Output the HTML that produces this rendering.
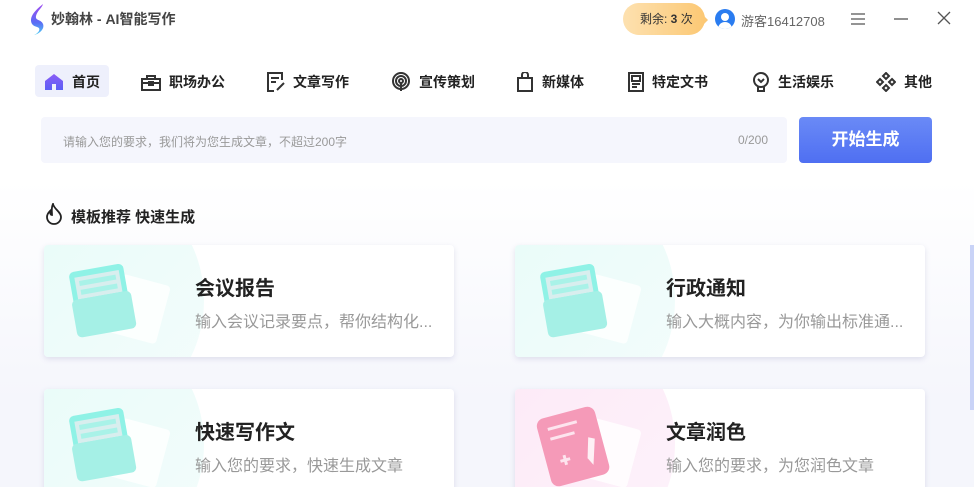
<!DOCTYPE html>
<html><head><meta charset="utf-8"><style>
*{margin:0;padding:0;box-sizing:border-box}
html,body{width:974px;height:487px;overflow:hidden}
body{font-family:"Liberation Sans","Noto Sans CJK SC",sans-serif;background:linear-gradient(#fff 0,#fff 180px,#f5f6fc 400px);position:relative;color:#222}
.abs{position:absolute}
.nav{position:absolute;top:66px;height:31px;display:flex;align-items:center;font-size:14px;font-weight:bold;color:#222}
.nav svg{margin-right:8px}
.card{position:absolute;width:410px;height:112px;background:#fff;border-radius:4px;box-shadow:0 2px 6px rgba(120,120,170,.2);overflow:hidden}
.card .blob{position:absolute;left:-40px;top:-60px;width:200px;height:230px;border-radius:50%;background:linear-gradient(135deg,#e7fbf8,#f4fdfc)}
.card .t{position:absolute;left:151px;top:27px;font-size:20px;font-weight:bold;color:#222}
.card .d{position:absolute;left:151px;top:63px;font-size:16px;color:#999}
</style></head><body>
<svg class="abs" style="left:29px;top:4px" width="18" height="32" viewBox="0 0 18 32"><defs><linearGradient id="lg" x1="0" y1="0" x2="0" y2="1"><stop offset="0" stop-color="#a04cf0"/><stop offset=".6" stop-color="#5b6cf5"/><stop offset="1" stop-color="#4fd0f5"/></linearGradient></defs><path d="M14 0 C4 8 0 14 3 20 C6 24 12 22 10 27 C8 30 5 31 5 31 C10 30 16 25 14 20 C12 15 6 17 7 12 C8 7 13 4 14 0Z" fill="url(#lg)"/></svg>
<div class="abs" style="left:51px;top:9px;font-size:14px;font-weight:bold;color:#444">妙翰林 - AI智能写作</div>
<div class="abs" style="left:623px;top:3px;width:82px;height:32px;border-radius:16px;background:linear-gradient(90deg,#fde1b0,#fcc874);font-size:12px;color:#333;line-height:32px;padding-left:17px">剩余: <b>3</b> 次</div>
<div class="abs" style="left:703px;top:15px;width:0;height:0;border-top:5px solid transparent;border-bottom:5px solid transparent;border-left:5px solid #fcc874"></div>
<div class="abs" style="left:715px;top:9px;width:20px;height:20px;border-radius:50%;background:#2a7cf0;overflow:hidden"><div style="position:absolute;left:6px;top:4px;width:8px;height:8px;border-radius:50%;background:#fff"></div><div style="position:absolute;left:3px;top:13px;width:14px;height:10px;border-radius:7px 7px 0 0;background:#fff"></div></div>
<div class="abs" style="left:741px;top:11px;font-size:13px;color:#666">游客16412708</div>
<svg class="abs" style="left:850px;top:12px" width="16" height="14"><path d="M1 2H15M1 7H15M1 12H15" stroke="#555" stroke-width="1.3"/></svg>
<svg class="abs" style="left:893px;top:12px" width="16" height="14"><path d="M1 7H15" stroke="#555" stroke-width="1.3"/></svg>
<svg class="abs" style="left:937px;top:11px" width="14" height="14"><path d="M1 1L13 13M13 1L1 13" stroke="#555" stroke-width="1.3"/></svg>

<div class="abs" style="left:35px;top:65px;width:74px;height:32px;border-radius:4px;background:#eef0fc"></div>
<div class="nav" style="left:44px"><svg width="20" height="18" viewBox="0 0 20 18"><defs><linearGradient id="hg" x1="0" y1="0" x2="0" y2="1"><stop offset="0" stop-color="#8b5cf6"/><stop offset="1" stop-color="#5a5ff5"/></linearGradient></defs><path d="M10 1L19 8V17H12V11H8V17H1V8Z" fill="url(#hg)"/></svg>首页</div>
<div class="nav" style="left:141px"><svg width="20" height="18" viewBox="0 0 20 18" fill="none" stroke="#333" stroke-width="2"><path d="M6 6V3h8v3M1 6h18v11H1zM1 10h18"/><rect x="8" y="9" width="4" height="3" fill="#333"/></svg>职场办公</div>
<div class="nav" style="left:267px"><svg width="18" height="20" viewBox="0 0 18 20" fill="none" stroke="#333" stroke-width="2"><path d="M15 8V1H1v18h6M4 6h8M4 10h5M10 18l7-7"/></svg>文章写作</div>
<div class="nav" style="left:391px"><svg width="20" height="20" viewBox="0 0 20 20" fill="none" stroke="#333" stroke-width="2"><circle cx="10" cy="9" r="8"/><circle cx="10" cy="9" r="5"/><circle cx="10" cy="9" r="2"/><path d="M10 11v8"/></svg>宣传策划</div>
<div class="nav" style="left:516px"><svg width="18" height="20" viewBox="0 0 18 20" fill="none" stroke="#333" stroke-width="2"><path d="M2 6h14v13H2zM6 6V3a3 3 0 016 0v3"/></svg>新媒体</div>
<div class="nav" style="left:628px"><svg width="16" height="20" viewBox="0 0 16 20" fill="none" stroke="#333" stroke-width="2"><rect x="1" y="1" width="14" height="18"/><rect x="4" y="4" width="8" height="5"/><path d="M4 12h8M4 15h5"/></svg>特定文书</div>
<div class="nav" style="left:752px"><svg width="18" height="20" viewBox="0 0 18 20" fill="none" stroke="#333" stroke-width="2"><circle cx="9" cy="8" r="7"/><path d="M6 15v4h6v-4M6 7l3 3 3-3"/></svg>生活娱乐</div>
<div class="nav" style="left:876px"><svg width="20" height="20" viewBox="0 0 20 20" fill="none" stroke="#333" stroke-width="2"><path d="M10 1l3 3-3 3-3-3zM10 13l3 3-3 3-3-3zM4 7l3 3-3 3-3-3zM16 7l3 3-3 3-3-3z"/></svg>其他</div>

<div class="abs" style="left:41px;top:117px;width:746px;height:46px;border-radius:4px;background:#f5f6fd"></div>
<div class="abs" style="left:63px;top:133px;font-size:12px;color:#999">请输入您的要求，我们将为您生成文章，不超过200字</div>
<div class="abs" style="left:738px;top:133px;font-size:12px;color:#999">0/200</div>
<div class="abs" style="left:799px;top:117px;width:133px;height:46px;border-radius:4px;background:linear-gradient(#6a8af6,#4f6ff2);color:#fff;font-size:17px;font-weight:bold;text-align:center;line-height:46px">开始生成</div>

<svg class="abs" style="left:45px;top:203px" width="18" height="22" viewBox="0 0 18 22" fill="none" stroke="#222" stroke-width="1.8"><path d="M8 1C9 6 16 9 16 14a7 7 0 01-14 0c0-3 2-5 3-6 0 3 1 4 2 4C7 8 6 5 8 1z"/></svg>
<div class="abs" style="left:71px;top:206px;font-size:15px;font-weight:bold">模板推荐 快速生成</div>

<div class="card" style="left:44px;top:245px"><div class="blob"></div>
<svg class="abs" style="left:20px;top:12px" width="110" height="90"><rect x="50" y="22" width="50" height="60" rx="4" fill="#fff" opacity=".8" transform="rotate(15 75 52)"/><g transform="rotate(-10 40 45)"><rect x="10" y="10" width="55" height="60" rx="5" fill="#8ff2e6"/><rect x="15" y="16" width="45" height="22" fill="#d8eeee"/><rect x="19" y="20" width="37" height="5" fill="#a9f2e8"/><rect x="19" y="29" width="37" height="5" fill="#a9f2e8"/><rect x="8" y="38" width="60" height="38" rx="5" fill="#a5f0e6"/></g></svg>
<div class="t">会议报告</div><div class="d">输入会议记录要点，帮你结构化...</div></div>
<div class="card" style="left:515px;top:245px"><div class="blob"></div>
<svg class="abs" style="left:20px;top:12px" width="110" height="90"><rect x="50" y="22" width="50" height="60" rx="4" fill="#fff" opacity=".8" transform="rotate(15 75 52)"/><g transform="rotate(-10 40 45)"><rect x="10" y="10" width="55" height="60" rx="5" fill="#8ff2e6"/><rect x="15" y="16" width="45" height="22" fill="#d8eeee"/><rect x="19" y="20" width="37" height="5" fill="#a9f2e8"/><rect x="19" y="29" width="37" height="5" fill="#a9f2e8"/><rect x="8" y="38" width="60" height="38" rx="5" fill="#a5f0e6"/></g></svg>
<div class="t">行政通知</div><div class="d">输入大概内容，为你输出标准通...</div></div>
<div class="card" style="left:44px;top:389px"><div class="blob"></div>
<svg class="abs" style="left:20px;top:12px" width="110" height="90"><rect x="50" y="22" width="50" height="60" rx="4" fill="#fff" opacity=".8" transform="rotate(15 75 52)"/><g transform="rotate(-10 40 45)"><rect x="10" y="10" width="55" height="60" rx="5" fill="#8ff2e6"/><rect x="15" y="16" width="45" height="22" fill="#d8eeee"/><rect x="19" y="20" width="37" height="5" fill="#a9f2e8"/><rect x="19" y="29" width="37" height="5" fill="#a9f2e8"/><rect x="8" y="38" width="60" height="38" rx="5" fill="#a5f0e6"/></g></svg>
<div class="t">快速写作文</div><div class="d">输入您的要求，快速生成文章</div></div>
<div class="card" style="left:515px;top:389px"><div class="blob" style="background:linear-gradient(135deg,#fde8f6,#fdf3fb)"></div>
<svg class="abs" style="left:20px;top:12px" width="110" height="90"><rect x="50" y="22" width="50" height="60" rx="4" fill="#fff" opacity=".8" transform="rotate(15 75 52)"/><g transform="rotate(-15 40 45)"><rect x="8" y="10" width="60" height="70" rx="8" fill="#f59ab8"/><path d="M18 22h30M18 32h25M22 56h10M27 51v10" stroke="#fde4ee" stroke-width="3"/><path d="M55 40l6 3-8 25-4-8z" fill="#fff" opacity=".85"/></g></svg>
<div class="t">文章润色</div><div class="d">输入您的要求，为您润色文章</div></div>
<div class="abs" style="left:970px;top:245px;width:4px;height:165px;background:#c9d3f7"></div>
</body></html>
